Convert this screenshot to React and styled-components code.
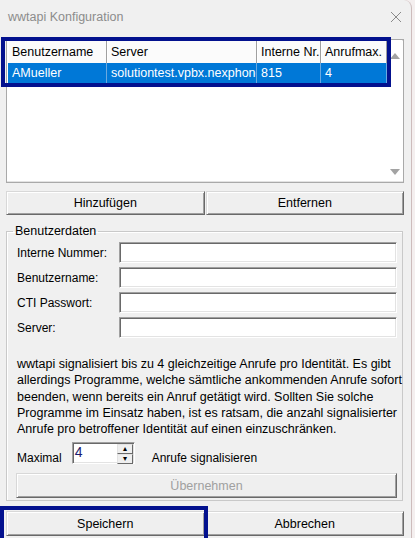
import styled, { createGlobalStyle } from "styled-components";

const columns = [
  { title: "Benutzername", width: 99 },
  { title: "Server", width: 150 },
  { title: "Interne Nr.", width: 64 },
  { title: "Anrufmax.", width: 66 },
];

const row = ["AMueller", "solutiontest.vpbx.nexphone.ch", "815", "4"];

const fields = ["Interne Nummer:", "Benutzername:", "CTI Passwort:", "Server:"];

function App() {
  return (
    <>
      <GlobalStyle />
      <Window>
        <TitleBar>
          <span>wwtapi Konfiguration</span>
          <CloseIcon viewBox="0 0 12 12">
            <path d="M1 1 L11 11 M11 1 L1 11" />
          </CloseIcon>
        </TitleBar>
        <Body>
          <ListBox>
            <Table>
              <HeaderRow>
                {columns.map((c) => (
                  <HeaderCell key={c.title} $width={c.width}>
                    {c.title}
                  </HeaderCell>
                ))}
              </HeaderRow>
              <SelectedRow>
                {row.map((v, i) => (
                  <Cell key={i} $width={columns[i].width}>
                    {v}
                  </Cell>
                ))}
              </SelectedRow>
            </Table>
            <ScrollBar>
              <Arrow $up />
              <Arrow />
            </ScrollBar>
            <Highlight $top={-3} $left={-6} $width={390} $height={50} />
          </ListBox>

          <ButtonRow>
            <Button>Hinzufügen</Button>
            <Button>Entfernen</Button>
          </ButtonRow>

          <Group>
            <Legend>Benutzerdaten</Legend>
            <Fields>
              {fields.map((f) => (
                <FieldRow key={f}>
                  <Label>{f}</Label>
                  <TextInput />
                </FieldRow>
              ))}
            </Fields>
            <Info>
              wwtapi signalisiert bis zu 4 gleichzeitige Anrufe pro Identität. Es gibt
              <br />
              allerdings Programme, welche sämtliche ankommenden Anrufe sofort
              <br />
              beenden, wenn bereits ein Anruf getätigt wird. Sollten Sie solche
              <br />
              Programme im Einsatz haben, ist es ratsam, die anzahl signalisierter
              <br />
              Anrufe pro betroffener Identität auf einen einzuschränken.
            </Info>
            <MaxRow>
              <span>Maximal</span>
              <Spinner>
                <SpinValue>4</SpinValue>
                <SpinButtons>
                  <SpinButton>▴</SpinButton>
                  <SpinButton>▾</SpinButton>
                </SpinButtons>
              </Spinner>
              <span>Anrufe signalisieren</span>
            </MaxRow>
            <Button $disabled $height={25}>
              Übernehmen
            </Button>
          </Group>

          <FooterRow>
            <Button $height={25}>Speichern</Button>
            <Button $height={25}>Abbrechen</Button>
            <Highlight $top={-5} $left={-6} $width={208} $height={36} />
          </FooterRow>
        </Body>
      </Window>
    </>
  );
}

const GlobalStyle = createGlobalStyle`
  body {
    margin: 0;
    background-color: #f4efef;
    font-family: "Liberation Sans", Arial, sans-serif;
    font-size: 12px;
    color: #000000;
  }
`;

const Window = styled.div`
  width: 412px;
  height: 538px;
  background-color: #f0f0f0;
  border-right: 1px solid #cdbcbc;
  border-top-right-radius: 8px;
  overflow: hidden;
  box-sizing: border-box;
`;

const TitleBar = styled.div`
  height: 34px;
  display: flex;
  align-items: center;
  justify-content: space-between;
  padding: 0 8px 0 8px;
  color: #8c8c8c;
  font-size: 12.5px;
`;

const CloseIcon = styled.svg`
  width: 12px;
  height: 12px;
  margin-right: 1px;
  stroke: #8a8a8a;
  stroke-width: 1;
  fill: none;
`;

const Body = styled.div`
  padding: 5px 7px 0 6px;
  display: flex;
  flex-direction: column;
`;

const ListBox = styled.div`
  position: relative;
  height: 144px;
  background-color: #ffffff;
  border: 1px solid #a9a9a9;
  box-shadow: inset -1px -1px #e3e3e3;
  box-sizing: border-box;
  display: flex;
  justify-content: space-between;
  padding: 1px 0 1px 1px;
`;

const Table = styled.div`
  display: flex;
  flex-direction: column;
`;

const HeaderRow = styled.div`
  display: flex;
  height: 22px;
  background-color: #fbfbfb;
`;

const HeaderCell = styled.div`
  width: ${(p) => p.$width}px;
  padding-left: 4px;
  box-sizing: border-box;
  display: flex;
  align-items: center;
  white-space: nowrap;
  overflow: hidden;
  border-right: 1px solid #a0a0a0;
  box-shadow: inset 1px 0 #ffffff;
  font-size: 12.5px;
`;

const SelectedRow = styled.div`
  display: flex;
  height: 20px;
  background-color: #0078d7;
  color: #ffffff;
`;

const Cell = styled.div`
  width: ${(p) => p.$width}px;
  padding-left: 4px;
  box-sizing: border-box;
  display: flex;
  align-items: center;
  white-space: nowrap;
  overflow: hidden;
  border-right: 1px solid #6aa9e0;
  font-size: 12.5px;
`;

const ScrollBar = styled.div`
  width: 17px;
  display: flex;
  flex-direction: column;
  justify-content: space-between;
  align-items: center;
  padding: 12px 0 6px 0;
  background-color: #ffffff;
`;

const Arrow = styled.div`
  width: 0;
  height: 0;
  border-left: 5px solid transparent;
  border-right: 5px solid transparent;
  ${(p) =>
    p.$up
      ? "border-bottom: 6px solid #a3a3a3;"
      : "border-top: 6px solid #a3a3a3;"}
`;

const Highlight = styled.div`
  position: absolute;
  top: ${(p) => p.$top}px;
  left: ${(p) => p.$left}px;
  width: ${(p) => p.$width}px;
  height: ${(p) => p.$height}px;
  border: 4px solid #03118e;
  box-sizing: border-box;
  pointer-events: none;
`;

const ButtonRow = styled.div`
  display: grid;
  grid-template-columns: 1fr 1fr;
  gap: 1px;
  margin-top: 8px;
`;

const Button = styled.div`
  height: ${(p) => p.$height || 24}px;
  display: flex;
  align-items: center;
  justify-content: center;
  box-sizing: border-box;
  background-color: #efefef;
  border: 1px solid;
  border-color: #d8d8d8 #696969 #696969 #d8d8d8;
  box-shadow: inset 1px 1px #ffffff, inset -1px -1px #a0a0a0;
  color: ${(p) => (p.$disabled ? "#a0a0a0" : "#000000")};
  font-size: 12.5px;
`;

const Group = styled.fieldset`
  margin: 9px 1px 0 0;
  padding: 0 5px 2px 9px;
  border: 1px solid #c9c9c9;
  box-shadow: inset 1px 1px #ffffff;
  display: flex;
  flex-direction: column;
  min-width: 0;
`;

const Legend = styled.legend`
  padding: 0 2px;
  margin-left: -3px;
  font-size: 12.5px;
`;

const Fields = styled.div`
  display: flex;
  flex-direction: column;
  gap: 4px;
  margin-top: 4px;
`;

const FieldRow = styled.div`
  display: flex;
  align-items: center;
  justify-content: space-between;
`;

const Label = styled.span`
  padding-left: 1px;
  font-size: 12px;
`;

const TextInput = styled.div`
  width: 278px;
  height: 21px;
  box-sizing: border-box;
  background-color: #ffffff;
  border: 1px solid;
  border-color: #a0a0a0 #ffffff #ffffff #a0a0a0;
  box-shadow: inset 1px 1px #696969, inset -1px -1px #e3e3e3;
`;

const Info = styled.p`
  margin: 18px 0 0 1px;
  line-height: 16.3px;
  font-size: 12.5px;
  white-space: nowrap;
`;

const MaxRow = styled.div`
  display: flex;
  align-items: flex-end;
  gap: 10px;
  margin: 5px 0 9px 1px;

  & > span {
    line-height: 14px;
    margin-bottom: -1px;
  }

  & > span:last-child {
    margin-left: 7px;
  }
`;

const Spinner = styled.div`
  width: 63px;
  height: 22px;
  box-sizing: border-box;
  display: flex;
  justify-content: space-between;
  background-color: #ffffff;
  border: 1px solid;
  border-color: #a0a0a0 #ffffff #ffffff #a0a0a0;
  box-shadow: inset 1px 1px #696969, inset -1px -1px #e3e3e3;
  padding: 1px 1px 1px 2px;
`;

const SpinValue = styled.span`
  font-size: 14px;
  line-height: 16px;
  color: #1a1a6e;
`;

const SpinButtons = styled.div`
  display: flex;
  flex-direction: column;
  width: 16px;
`;

const SpinButton = styled.div`
  flex: 1;
  display: flex;
  align-items: center;
  justify-content: center;
  font-size: 8px;
  line-height: 8px;
  background-color: #efefef;
  border: 1px solid;
  border-color: #e3e3e3 #696969 #696969 #e3e3e3;
`;

const FooterRow = styled.div`
  position: relative;
  display: grid;
  grid-template-columns: 1fr 1fr;
  gap: 1px;
  margin-top: 10px;
`;

export default App;
